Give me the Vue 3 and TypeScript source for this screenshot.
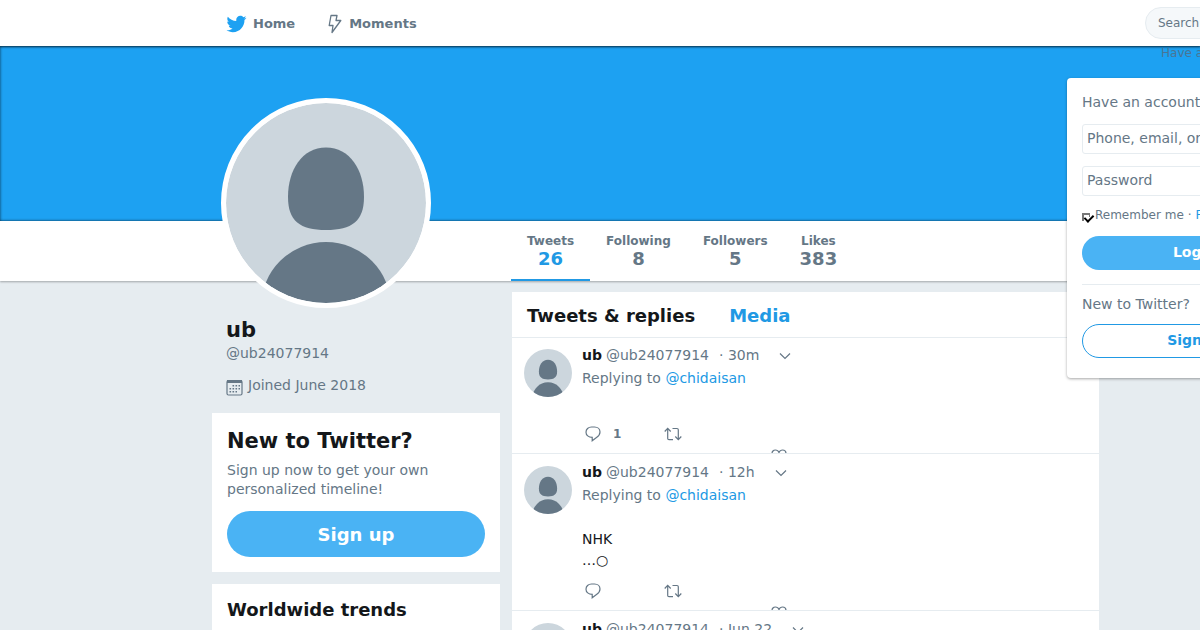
<script setup lang="ts">
import { ref } from 'vue'

interface Stat { label: string; value: string; active?: boolean }
interface Tweet { id: number; time: string; lines: string[]; replies?: string }

const stats: Stat[] = [
  { label: 'Tweets', value: '26', active: true },
  { label: 'Following', value: '8' },
  { label: 'Followers', value: '5' },
  { label: 'Likes', value: '383' },
]

const tweets: Tweet[] = [
  { id: 1, time: '30m', lines: [], replies: '1' },
  { id: 2, time: '12h', lines: ['NHK', '…○'] },
  { id: 3, time: 'Jun 22', lines: [] },
]

const login = ref('')
const password = ref('')
const search = ref('')
const remember = ref(true)
</script>

<template>
  <div class="page">
    <svg class="defs" aria-hidden="true">
      <symbol id="person" viewBox="0 0 200 200">
        <rect width="200" height="200" fill="#ccd6dd" />
        <path d="M100 44.500C124 44.500 138 67 138 94C138 118 126 127 100 127C74 127 62 118 62 94C62 67 76 44.500 100 44.500Z" fill="#657786" />
        <circle cx="100" cy="204" r="65" fill="#657786" />
      </symbol>
    </svg>

    <header class="topbar">
      <nav class="nav">
        <a href="#" class="nav-link">
          <svg class="bird" viewBox="0 0 24 24"><path fill="#1da1f2" d="M23.954 4.569c-.885.389-1.83.654-2.825.775 1.014-.611 1.794-1.574 2.163-2.723-.951.555-2.005.959-3.127 1.184-.896-.959-2.173-1.559-3.591-1.559-2.717 0-4.92 2.203-4.92 4.917 0 .39.045.765.127 1.124C7.691 8.094 4.066 6.13 1.64 3.161c-.427.722-.666 1.561-.666 2.475 0 1.71.87 3.213 2.188 4.096-.807-.026-1.566-.248-2.228-.616v.061c0 2.385 1.693 4.374 3.946 4.827-.413.111-.849.171-1.296.171-.314 0-.615-.03-.916-.086.631 1.953 2.445 3.377 4.604 3.417-1.68 1.319-3.809 2.105-6.102 2.105-.39 0-.779-.023-1.17-.067 2.189 1.394 4.768 2.209 7.557 2.209 9.054 0 13.999-7.496 13.999-13.986 0-.209 0-.42-.015-.63.961-.689 1.8-1.56 2.46-2.548l-.047-.02z" /></svg>
          Home
        </a>
        <a href="#" class="nav-link">
          <svg class="bolt" viewBox="0 0 14 20"><path d="M3 1.500H9L8 6.500H12.800L4 18.500L5 11.500H1.200Z" fill="none" stroke="#657786" stroke-width="1.300" stroke-linejoin="round" /></svg>
          Moments
        </a>
      </nav>
      <div class="session">
        <input v-model="search" class="search" type="search" placeholder="Search Twitter" aria-label="Search Twitter" />
        <a href="#" class="have">Have an account? Log in</a>
        <form class="login" @submit.prevent>
          <p class="login-title">Have an account?</p>
          <input v-model="login" class="field" type="text" placeholder="Phone, email, or username" aria-label="Phone, email, or username" />
          <input v-model="password" class="field" type="password" placeholder="Password" aria-label="Password" />
          <div class="remember">
            <label class="remember-label"><input v-model="remember" class="tick" type="checkbox" />Remember me</label>
            <span>·</span>
            <a href="#">Forgot password?</a>
          </div>
          <button class="btn btn-login" type="submit">Log in</button>
          <p class="login-new">New to Twitter?</p>
          <button class="btn btn-outline" type="button">Sign up</button>
        </form>
      </div>
    </header>

    <div class="banner"></div>

    <div class="statbar">
      <div class="avatar"><svg><use href="#person" /></svg></div>
      <nav class="stats">
        <a v-for="s in stats" :key="s.label" href="#" class="stat" :class="{ active: s.active }">
          <span class="stat-label">{{ s.label }}</span>
          <span class="stat-value">{{ s.value }}</span>
        </a>
      </nav>
    </div>

    <main class="content">
      <aside class="side">
        <section class="profile">
          <h1>ub</h1>
          <a href="#" class="handle">@ub24077914</a>
          <p class="joined">
            <svg viewBox="0 0 17 17"><rect x="1" y="1.500" width="15" height="14.500" rx="1.500" fill="none" stroke="#657786" stroke-width="1.200" /><path d="M1 2.500H16" stroke="#657786" stroke-width="3" /><path d="M6.500 6.800H14M3.500 9.800H14M3.500 12.800H11" stroke="#657786" stroke-width="1.600" stroke-dasharray="1.600 1.400" /></svg>
            Joined June 2018
          </p>
        </section>
        <section class="card join">
          <h2>New to Twitter?</h2>
          <p>Sign up now to get your own personalized timeline!</p>
          <button class="btn btn-join" type="button">Sign up</button>
        </section>
        <section class="card trends">
          <h3>Worldwide trends</h3>
        </section>
      </aside>

      <section class="timeline">
        <div class="tabs">
          <h2>Tweets &amp; replies</h2>
          <a href="#">Media</a>
        </div>
        <article v-for="t in tweets" :key="t.id" class="tweet">
          <svg class="mini"><use href="#person" /></svg>
          <div class="body">
            <div class="meta">
              <a href="#" class="name">ub</a>
              <span class="user">@ub24077914</span>
              <span class="time">· {{ t.time }}</span>
              <button class="icon caret" type="button" aria-label="More">
                <svg viewBox="0 0 12 8"><path d="M1 1.500L6 6.500L11 1.500" /></svg>
              </button>
            </div>
            <div class="reply-to">Replying to <a href="#">@chidaisan</a></div>
            <div class="text"><div v-for="l in t.lines" :key="l">{{ l }}</div></div>
            <div class="actions">
              <button class="icon" type="button" aria-label="Reply">
                <svg class="bubble" viewBox="0 0 16 16"><path d="M6.500 1H9.500C12.800 1 15 3.200 15 6C15 8.500 13.500 10.200 11.500 11.500L7.200 14.700V11.300C3.500 11.300 1 9.200 1 6.200C1 3.200 3.300 1 6.500 1Z" /></svg>
                <b>{{ t.replies }}</b>
              </button>
              <button class="icon" type="button" aria-label="Retweet">
                <svg class="retweet" viewBox="0 0 18 14"><path d="M.700 4.500L3.700 1.300L6.700 4.500M3.700 1.500V11.500Q3.700 12.700 5 12.700H9M8.500 1.500H13Q14.300 1.500 14.300 2.800V12.500M11.300 9.500L14.300 12.700L17.300 9.500" /></svg>
              </button>
              <button class="icon like" type="button" aria-label="Like">
                <svg class="heart" viewBox="0 0 16 15"><path d="M8 14C3 10 1 7.500 1 4.500C1 2.500 2.500 1 4.400 1C6 1 7.300 1.800 8 3.500C8.700 1.800 10 1 11.600 1C13.500 1 15 2.500 15 4.500C15 7.500 13 10 8 14Z" /></svg>
              </button>
            </div>
          </div>
        </article>
      </section>
    </main>
  </div>
</template>

<style>
body { margin: 0; overflow: hidden; background: #e6ecf0; }
</style>

<style scoped>
.page { height: 100vh; overflow: hidden; background: #e6ecf0; color: #14171a; font: 14px/20px "DejaVu Sans", sans-serif; }
.page * { box-sizing: border-box; }
.defs { position: absolute; width: 0; height: 0; }
a { color: #2199e4; text-decoration: none; }
h1, h2, h3, p { margin: 0; }
input, button { font-family: inherit; }

.topbar { position: relative; z-index: 3; display: flex; justify-content: space-between; height: 46px; padding-left: 226px; background: #fff; box-shadow: 0 1px 2px rgba(0, 0, 0, .5); }
.nav { display: flex; gap: 32px; padding-top: 1px; }
.nav-link { display: flex; align-items: center; gap: 6px; color: #657786; font-size: 13px; font-weight: bold; }
.bird { width: 21px; height: 20px; }
.bolt { width: 16px; height: 20px; }
.session { position: relative; width: 55px; padding-top: 7px; }
.search { display: block; width: 220px; height: 32px; padding: 0 12px; border: 1px solid #e6ecf0; border-radius: 16px; outline: 0; background: #f5f8fa; color: #14171a; font-size: 12px; }
input::placeholder { color: #657786; opacity: 1; }
.have { position: absolute; top: 43px; left: 16px; color: #4a7594; font-size: 12px; white-space: nowrap; }

.login { position: absolute; top: 78px; left: -78px; width: 260px; height: 300px; padding: 14px 15px; border-radius: 4px; background: #fff; box-shadow: 0 1px 3px rgba(0, 0, 0, .35); color: #657786; }
.login-title { margin-bottom: 12px; }
.field { display: block; width: 100%; height: 30px; margin-bottom: 12px; padding: 0 4px 2px; border: 1px solid #e6ecf0; border-radius: 3px; outline: 0; background: #fff; font-size: 14px; }
.remember { display: flex; gap: 4px; margin-top: -3px; margin-bottom: 11px; font-size: 12px; white-space: nowrap; }
.remember-label { display: flex; align-items: center; }
.tick { position: relative; appearance: none; width: 8px; height: 8px; margin: 3px 5px 0 0; border: solid #777; border-width: 2px 0 0 2px; }
.tick::before { content: ""; position: absolute; right: 0; top: 0; width: 1px; height: 2px; background: #777; }
.tick:checked::after { content: ""; position: absolute; left: 2px; top: -2px; width: 4px; height: 7px; border: solid #000; border-width: 0 2px 2px 0; transform: rotate(45deg); }
.btn { display: block; width: 100%; padding: 0; border: 0; border-radius: 100px; background: #4ab3f4; color: #fff; font-weight: bold; }
.btn-login { height: 34px; padding-bottom: 2px; font-size: 14px; }
.login-new { margin: 14px 0 10px; padding-top: 9px; border-top: 1px solid #e6ecf0; }
.btn-outline { height: 34px; padding-bottom: 2px; border: 1px solid #2199e4; background: #fff; color: #2199e4; font-size: 14px; }

.banner { height: 175px; margin-right: -4px; background: #1da1f2; box-shadow: inset 0 0 3px rgba(0, 0, 0, .7); }
.statbar { position: relative; height: 60px; padding-left: 511px; background: #fff; box-shadow: 0 1px 2px rgba(0, 0, 0, .3); }
.avatar { position: absolute; left: 221px; bottom: -27px; width: 210px; height: 210px; overflow: hidden; border: 5px solid #fff; border-radius: 50%; background: #fff; }
.avatar svg { display: block; width: 100%; height: 100%; border-radius: 50%; }
.stats { display: flex; height: 100%; }
.stat { display: flex; flex-direction: column; align-items: center; padding: 11px 16px 0; color: #657786; font-weight: bold; }
.stat-label { font-size: 12px; line-height: 18px; }
.stat-value { font-size: 18px; line-height: 18px; }
.active { border-bottom: 2px solid #2199e4; }
.active .stat-value { color: #2199e4; }

.content { display: grid; grid-template-columns: 288px 587px; gap: 12px; align-items: start; padding: 11px 0 0 212px; }
.profile { padding: 25px 14px 18px; color: #657786; }
.profile h1 { color: #14171a; font-size: 21px; line-height: 26px; }
.handle { display: block; color: #657786; }
.joined { display: flex; align-items: center; gap: 5px; height: 20px; margin-top: 12px; }
.joined svg { width: 17px; height: 17px; margin-top: 4px; }
.card { margin-bottom: 12px; padding: 15px; background: #fff; }
.join h2 { font-size: 21px; line-height: 27px; }
.join p { margin: 6px 0 12px; color: #657786; line-height: 19px; }
.btn-join { height: 46px; font-size: 18px; }
.trends h3 { font-size: 18px; line-height: 22px; }

.timeline { background: #fff; }
.tabs { display: flex; gap: 34px; height: 46px; margin-bottom: -1px; padding: 0 15px; border-bottom: 1px solid #e6ecf0; font-size: 18px; font-weight: bold; line-height: 48px; }
.tabs h2 { font-size: 18px; }
.tweet { display: flex; gap: 10px; padding: 8px 12px 0; border-bottom: 1px solid #e6ecf0; }
.mini { flex: none; width: 48px; height: 48px; margin-top: 4px; border-radius: 50%; }
.body { flex: 1; }
.meta { display: flex; color: #657786; }
.name { margin-right: 4px; color: #14171a; font-weight: bold; }
.time { margin: 0 20px 0 10px; }
.reply-to { margin-top: 3px; color: #657786; }
.text { min-height: 2px; margin: 24px 0 10px; line-height: 21px; }
.icon { display: flex; align-items: center; padding: 0; border: 0; background: none; color: #657786; font-size: 12px; }
.icon svg { fill: none; stroke: #657786; stroke-width: 1.2; }
.caret svg { width: 12px; height: 8px; margin-top: 2px; }
.actions { display: grid; grid-template-columns: 79px 107px 20px; align-items: start; height: 29px; padding-left: 3px; overflow: hidden; }
.actions .icon { height: 20px; gap: 12px; }
.bubble { width: 16px; height: 16px; }
.retweet { width: 18px; height: 14px; }
.actions .like { align-items: flex-start; margin-top: 25px; }
.heart { width: 16px; height: 15px; }
</style>
